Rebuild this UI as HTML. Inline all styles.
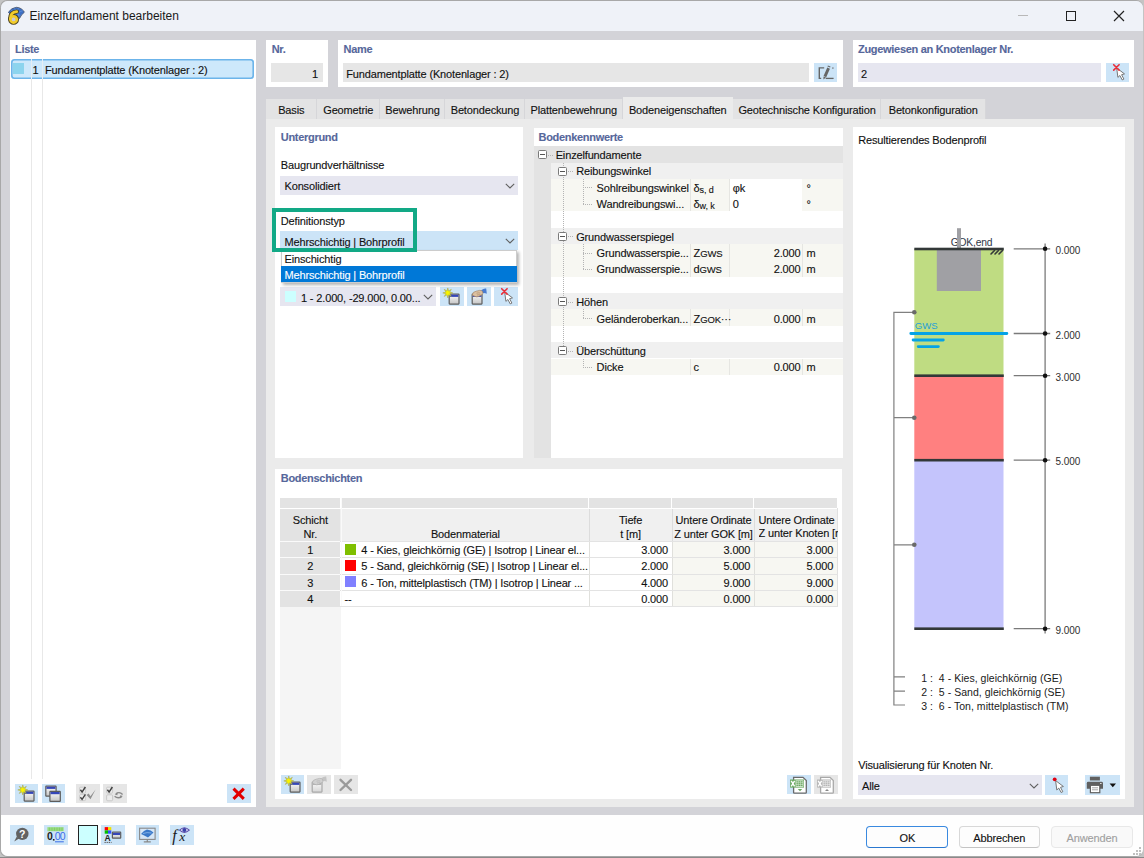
<!DOCTYPE html>
<html><head><meta charset="utf-8"><style>
html,body{margin:0;padding:0}
body{width:1144px;height:858px;overflow:hidden;position:relative;font-family:"Liberation Sans",sans-serif;font-size:11px;color:#111;background:#6b6b6b}
.a{position:absolute}
.t{white-space:nowrap;line-height:13px;letter-spacing:-0.15px;-webkit-text-stroke:0.12px currentColor}
svg.a{overflow:visible}
</style></head><body>
<svg width="0" height="0" style="position:absolute"><defs>
<linearGradient id="wg" x1="0" y1="0" x2="0" y2="1"><stop offset="0" stop-color="#fdfdfd"/><stop offset="1" stop-color="#c4c4c4"/></linearGradient>
<linearGradient id="wgd" x1="0" y1="0" x2="0" y2="1"><stop offset="0" stop-color="#fafafa"/><stop offset="1" stop-color="#d6d6d6"/></linearGradient>
</defs></svg>
<div class="a " style="left:0px;top:0px;width:1144px;height:858px;background:#c4c4c4;"></div>
<div class="a " style="left:0px;top:856.6px;width:1144px;height:1.4px;background:#8a8a8a;"></div>
<div class="a " style="left:0px;top:0px;width:1143.2px;height:856.8px;background:#a8a8a8;border-radius:7px"></div>
<div class="a " style="left:0.8px;top:0.9px;width:1141.8px;height:855.1px;background:#d3d3d8;border-radius:6.5px"></div>
<div class="a " style="left:0.8px;top:0.9px;width:1141.8px;height:30.2px;background:#eff2f8;border-radius:6.5px 6.5px 0 0"></div>
<div class="a " style="left:0.8px;top:815.2px;width:1141.8px;height:40.8px;background:#fefefe;border-radius:0 0 6.5px 6.5px"></div>
<div class="a " style="left:1139px;top:847px;width:2px;height:2px;background:#c0c0c0;"></div>
<div class="a " style="left:1136px;top:850px;width:2px;height:2px;background:#c0c0c0;"></div>
<div class="a " style="left:1139px;top:850px;width:2px;height:2px;background:#c0c0c0;"></div>
<div class="a " style="left:1133px;top:853px;width:2px;height:2px;background:#c0c0c0;"></div>
<div class="a " style="left:1136px;top:853px;width:2px;height:2px;background:#c0c0c0;"></div>
<div class="a " style="left:1139px;top:853px;width:2px;height:2px;background:#c0c0c0;"></div>
<svg class="a" style="left:7px;top:6px;" width="19" height="19" viewBox="0 0 19 19"><path d="M1.3 6.3 Q4.5 1.6 9.6 1.3 Q14.6 1.6 17.4 6.2 L14.5 9 L12.5 12.5 L10 11 L4 9 Z" fill="#3d6fc4" stroke="#4a5468" stroke-width="0.8" stroke-linejoin="round"/><path d="M4 4.5 L13.5 9.5 M7.5 2.2 L12 10.5 M3 7.2 L12 2.5 M8 8 L16 4.5" stroke="#7aaae8" stroke-width="0.6" opacity="0.8"/><path d="M3.2 13 Q3.2 6.3 9.8 5.6" stroke="#4a4020" stroke-width="4.4" fill="none" stroke-linecap="round"/><circle cx="6.6" cy="13.4" r="3.2" fill="none" stroke="#4a4020" stroke-width="4.4"/><path d="M3.2 13 Q3.2 6.3 9.8 5.6" stroke="#f2cc2a" stroke-width="2.6" fill="none" stroke-linecap="round"/><circle cx="6.6" cy="13.4" r="3.2" fill="#c8c8d4" stroke="#f2cc2a" stroke-width="2.6"/></svg>
<div class="a" style="left:29.5px;top:9px;font-size:12px;line-height:14px;color:#1a1a1a;letter-spacing:0">Einzelfundament bearbeiten</div>
<div class="a " style="left:1018px;top:15px;width:10px;height:1px;background:#b8b8b8;"></div>
<div class="a " style="left:1065.5px;top:10.5px;width:8.5px;height:8.5px;border:1.2px solid #222"></div>
<svg class="a" style="left:1113px;top:10px;" width="12" height="12" viewBox="0 0 12 12"><path d="M1 1 L11 11 M11 1 L1 11" stroke="#222" stroke-width="1.2"/></svg>
<div class="a " style="left:10px;top:40px;width:246px;height:767.2px;background:#fff;"></div>
<div class="a t " style="left:15px;top:42.7px;color:#56679b;font-weight:bold;letter-spacing:-0.3px">Liste</div>
<div class="a " style="left:31px;top:59px;width:1px;height:719.5px;background:#e8e8e8;"></div>
<div class="a " style="left:42px;top:59px;width:1px;height:719.5px;background:#e8e8e8;"></div>
<div class="a " style="left:10.6px;top:59.3px;width:243.4px;height:19.4px;background:#cde8fb;box-shadow:inset 0 0 0 1.6px #6cb4ea;border-radius:3.5px"></div>
<div class="a " style="left:31px;top:59px;width:1px;height:20px;background:#e6eef4;"></div>
<div class="a " style="left:42px;top:59px;width:1px;height:20px;background:#e6eef4;"></div>
<div class="a " style="left:13.1px;top:63.1px;width:11.3px;height:10.8px;background:#8cd4ee;"></div>
<div class="a t " style="right:1105.5px;top:64.0px;text-align:right;">1</div>
<div class="a t " style="left:45px;top:64.0px;">Fundamentplatte (Knotenlager : 2)</div>
<div class="a " style="left:266px;top:40px;width:62px;height:46.5px;background:#fff;"></div>
<div class="a t " style="left:271.7px;top:42.7px;color:#56679b;font-weight:bold;letter-spacing:-0.3px">Nr.</div>
<div class="a " style="left:271px;top:63px;width:52px;height:19.3px;background:#e6e6e6;"></div>
<div class="a t " style="right:826px;top:68.0px;text-align:right;">1</div>
<div class="a " style="left:338px;top:40px;width:505px;height:46.5px;background:#fff;"></div>
<div class="a t " style="left:343.5px;top:42.7px;color:#56679b;font-weight:bold;letter-spacing:-0.3px">Name</div>
<div class="a " style="left:343px;top:63px;width:466px;height:19.3px;background:#e6e6e6;"></div>
<div class="a t " style="left:346.2px;top:68.0px;">Fundamentplatte (Knotenlager : 2)</div>
<div class="a " style="left:813.7px;top:63px;width:23.6px;height:19.3px;background:#cce4f7;"></div>
<div class="a " style="left:853px;top:40px;width:281px;height:46.5px;background:#fff;"></div>
<div class="a t " style="left:858px;top:42.7px;color:#56679b;font-weight:bold;letter-spacing:-0.3px">Zugewiesen an Knotenlager Nr.</div>
<div class="a " style="left:858px;top:63px;width:243px;height:19.3px;background:#e6e6f0;"></div>
<div class="a t " style="left:861px;top:68.0px;">2</div>
<div class="a " style="left:1105.5px;top:63px;width:23.5px;height:19.3px;background:#cce4f7;"></div>
<div class="a " style="left:266px;top:99px;width:50.5px;height:20px;background:#e3e3e4;"></div>
<div class="a " style="left:315.5px;top:99px;width:1.0px;height:20px;background:#d6d6d9;"></div>
<div class="a t " style="left:191.25px;width:200px;top:104.4px;text-align:center;">Basis</div>
<div class="a " style="left:316.5px;top:99px;width:63.5px;height:20px;background:#e3e3e4;"></div>
<div class="a " style="left:379px;top:99px;width:1px;height:20px;background:#d6d6d9;"></div>
<div class="a t " style="left:248.25px;width:200px;top:104.4px;text-align:center;">Geometrie</div>
<div class="a " style="left:380px;top:99px;width:65px;height:20px;background:#e3e3e4;"></div>
<div class="a " style="left:444px;top:99px;width:1px;height:20px;background:#d6d6d9;"></div>
<div class="a t " style="left:312.5px;width:200px;top:104.4px;text-align:center;">Bewehrung</div>
<div class="a " style="left:445px;top:99px;width:80px;height:20px;background:#e3e3e4;"></div>
<div class="a " style="left:524px;top:99px;width:1px;height:20px;background:#d6d6d9;"></div>
<div class="a t " style="left:385.0px;width:200px;top:104.4px;text-align:center;">Betondeckung</div>
<div class="a " style="left:525px;top:99px;width:97.5px;height:20px;background:#e3e3e4;"></div>
<div class="a " style="left:621.5px;top:99px;width:1.0px;height:20px;background:#d6d6d9;"></div>
<div class="a t " style="left:473.75px;width:200px;top:104.4px;text-align:center;">Plattenbewehrung</div>
<div class="a " style="left:622.5px;top:97px;width:110.5px;height:22px;background:#ebebeb;"></div>
<div class="a t " style="left:577.75px;width:200px;top:104.4px;text-align:center;">Bodeneigenschaften</div>
<div class="a " style="left:733px;top:99px;width:148px;height:20px;background:#e3e3e4;"></div>
<div class="a " style="left:880px;top:99px;width:1px;height:20px;background:#d6d6d9;"></div>
<div class="a t " style="left:707.0px;width:200px;top:104.4px;text-align:center;">Geotechnische Konfiguration</div>
<div class="a " style="left:881px;top:99px;width:104.5px;height:20px;background:#e3e3e4;"></div>
<div class="a " style="left:984.5px;top:99px;width:1.0px;height:20px;background:#d6d6d9;"></div>
<div class="a t " style="left:833.25px;width:200px;top:104.4px;text-align:center;">Betonkonfiguration</div>
<div class="a " style="left:266px;top:119px;width:868px;height:688.2px;background:#ebebeb;"></div>
<div class="a " style="left:275.2px;top:127.3px;width:247.9px;height:330.8px;background:#fff;"></div>
<div class="a t " style="left:280.8px;top:130.5px;color:#56679b;font-weight:bold;letter-spacing:-0.3px">Untergrund</div>
<div class="a t " style="left:280.8px;top:159.0px;">Baugrundverhältnisse</div>
<div class="a " style="left:280.3px;top:175.8px;width:237.7px;height:18.8px;background:#e6e6f0;"></div>
<div class="a t " style="left:284.5px;top:180.0px;">Konsolidiert</div>
<div class="a t " style="left:280.8px;top:214.5px;">Definitionstyp</div>
<div class="a " style="left:280.3px;top:231.4px;width:237.7px;height:18.3px;background:#cce4f7;"></div>
<div class="a t " style="left:284.5px;top:235.5px;">Mehrschichtig | Bohrprofil</div>
<div class="a " style="left:280.3px;top:287.2px;width:155.4px;height:18.8px;background:#e6e6f0;"></div>
<div class="a " style="left:284.5px;top:290.8px;width:11.7px;height:11.5px;background:#ccffff;"></div>
<div class="a t " style="left:301px;top:291.5px;">1 - 2.000, -29.000, 0.00...</div>
<div class="a " style="left:440.4px;top:287.2px;width:23.5px;height:18.8px;background:#cce4f7;"></div>
<div class="a " style="left:467.3px;top:287.2px;width:23.5px;height:18.8px;background:#cce4f7;"></div>
<div class="a " style="left:494.2px;top:287.2px;width:23.5px;height:18.8px;background:#cce4f7;"></div>
<div class="a " style="left:280.8px;top:249.7px;width:236.7px;height:33px;background:#fff;box-shadow:2px 2px 3px rgba(0,0,0,0.3);border:1px solid #ccc;box-sizing:border-box"></div>
<div class="a t " style="left:284.5px;top:253.0px;">Einschichtig</div>
<div class="a " style="left:281.3px;top:266.4px;width:235.7px;height:15.8px;background:#0078d7;"></div>
<div class="a t " style="left:284.5px;top:269.0px;color:#fff">Mehrschichtig | Bohrprofil</div>
<div class="a " style="left:272.1px;top:208.4px;width:144.6px;height:43.6px;border:4.6px solid #12a986;box-sizing:border-box"></div>
<div class="a " style="left:533.6px;top:127.6px;width:309.1px;height:330.4px;background:#fff;"></div>
<div class="a t " style="left:538.5px;top:130.5px;color:#56679b;font-weight:bold;letter-spacing:-0.3px">Bodenkennwerte</div>
<div class="a " style="left:533.6px;top:146px;width:17.4px;height:312px;background:#e3e3e3;"></div>
<div class="a " style="left:533.6px;top:146px;width:309.1px;height:16.5px;background:#e3e3e3;"></div>
<div class="a " style="left:551px;top:162.5px;width:291.7px;height:16.1px;background:#f0f0f0;"></div>
<div class="a " style="left:551px;top:228px;width:291.7px;height:16px;background:#f0f0f0;"></div>
<div class="a " style="left:551px;top:293.2px;width:291.7px;height:16.0px;background:#f0f0f0;"></div>
<div class="a " style="left:551px;top:342.2px;width:291.7px;height:16.3px;background:#f0f0f0;"></div>
<div class="a " style="left:551px;top:178.6px;width:178.3px;height:32.9px;background:#f7f7f2;"></div>
<div class="a " style="left:802.4px;top:178.6px;width:40.3px;height:32.9px;background:#f7f7f2;"></div>
<div class="a " style="left:690px;top:178.6px;width:1px;height:32.9px;background:#e4e4e0;"></div>
<div class="a " style="left:729px;top:178.6px;width:1px;height:32.9px;background:#e6e6e2;"></div>
<div class="a " style="left:551px;top:244px;width:291.7px;height:32.8px;background:#f7f7f2;"></div>
<div class="a " style="left:802px;top:244px;width:1px;height:32.8px;background:#e6e6e2;"></div>
<div class="a " style="left:690px;top:244px;width:1px;height:32.8px;background:#e4e4e0;"></div>
<div class="a " style="left:729px;top:244px;width:1px;height:32.8px;background:#e6e6e2;"></div>
<div class="a " style="left:551px;top:309.2px;width:291.7px;height:16.8px;background:#f7f7f2;"></div>
<div class="a " style="left:802px;top:309.2px;width:1px;height:16.8px;background:#e6e6e2;"></div>
<div class="a " style="left:690px;top:309.2px;width:1px;height:16.8px;background:#e4e4e0;"></div>
<div class="a " style="left:729px;top:309.2px;width:1px;height:16.8px;background:#e6e6e2;"></div>
<div class="a " style="left:551px;top:358.5px;width:291.7px;height:16.4px;background:#f7f7f2;"></div>
<div class="a " style="left:802px;top:358.5px;width:1px;height:16.4px;background:#e6e6e2;"></div>
<div class="a " style="left:690px;top:358.5px;width:1px;height:16.4px;background:#e4e4e0;"></div>
<div class="a " style="left:729px;top:358.5px;width:1px;height:16.4px;background:#e6e6e2;"></div>
<div class="a " style="left:562.5px;top:162.5px;width:1px;height:188px;background-image:linear-gradient(to bottom,#b4b4b4 50%,transparent 50%);background-size:1px 2px"></div>
<div class="a " style="left:547.5px;top:154.5px;width:6px;height:1px;background-image:linear-gradient(to right,#b4b4b4 50%,transparent 50%);background-size:2px 1px"></div>
<div class="a " style="left:568px;top:171px;width:6px;height:1px;background-image:linear-gradient(to right,#b4b4b4 50%,transparent 50%);background-size:2px 1px"></div>
<div class="a " style="left:568px;top:236.4px;width:6px;height:1px;background-image:linear-gradient(to right,#b4b4b4 50%,transparent 50%);background-size:2px 1px"></div>
<div class="a " style="left:568px;top:301.6px;width:6px;height:1px;background-image:linear-gradient(to right,#b4b4b4 50%,transparent 50%);background-size:2px 1px"></div>
<div class="a " style="left:568px;top:350.7px;width:6px;height:1px;background-image:linear-gradient(to right,#b4b4b4 50%,transparent 50%);background-size:2px 1px"></div>
<div class="a " style="left:582.5px;top:178.6px;width:1px;height:25.599999999999994px;background-image:linear-gradient(to bottom,#b4b4b4 50%,transparent 50%);background-size:1px 2px"></div>
<div class="a " style="left:583px;top:187.3px;width:10px;height:1px;background-image:linear-gradient(to right,#b4b4b4 50%,transparent 50%);background-size:2px 1px"></div>
<div class="a " style="left:583px;top:203.7px;width:10px;height:1px;background-image:linear-gradient(to right,#b4b4b4 50%,transparent 50%);background-size:2px 1px"></div>
<div class="a " style="left:582.5px;top:244px;width:1px;height:25.600000000000023px;background-image:linear-gradient(to bottom,#b4b4b4 50%,transparent 50%);background-size:1px 2px"></div>
<div class="a " style="left:583px;top:252.7px;width:10px;height:1px;background-image:linear-gradient(to right,#b4b4b4 50%,transparent 50%);background-size:2px 1px"></div>
<div class="a " style="left:583px;top:269.1px;width:10px;height:1px;background-image:linear-gradient(to right,#b4b4b4 50%,transparent 50%);background-size:2px 1px"></div>
<div class="a " style="left:582.5px;top:309.2px;width:1px;height:9.300000000000011px;background-image:linear-gradient(to bottom,#b4b4b4 50%,transparent 50%);background-size:1px 2px"></div>
<div class="a " style="left:583px;top:318px;width:10px;height:1px;background-image:linear-gradient(to right,#b4b4b4 50%,transparent 50%);background-size:2px 1px"></div>
<div class="a " style="left:582.5px;top:358.5px;width:1px;height:9.199999999999989px;background-image:linear-gradient(to bottom,#b4b4b4 50%,transparent 50%);background-size:1px 2px"></div>
<div class="a " style="left:583px;top:367.2px;width:10px;height:1px;background-image:linear-gradient(to right,#b4b4b4 50%,transparent 50%);background-size:2px 1px"></div>
<div class="a " style="left:537.7px;top:150.3px;width:7px;height:7px;border:1px solid #7a7a7a;background:#fff;border-radius:1.5px"></div>
<div class="a " style="left:539.7px;top:154.3px;width:5.0px;height:1.0px;background:#555;"></div>
<div class="a " style="left:558.1px;top:166.5px;width:7px;height:7px;border:1px solid #7a7a7a;background:#fff;border-radius:1.5px"></div>
<div class="a " style="left:560.1px;top:170.5px;width:5.0px;height:1.0px;background:#555;"></div>
<div class="a " style="left:558.1px;top:231.9px;width:7px;height:7px;border:1px solid #7a7a7a;background:#fff;border-radius:1.5px"></div>
<div class="a " style="left:560.1px;top:235.9px;width:5.0px;height:1.0px;background:#555;"></div>
<div class="a " style="left:558.1px;top:297.1px;width:7px;height:7px;border:1px solid #7a7a7a;background:#fff;border-radius:1.5px"></div>
<div class="a " style="left:560.1px;top:301.1px;width:5.0px;height:1.0px;background:#555;"></div>
<div class="a " style="left:558.1px;top:346.2px;width:7px;height:7px;border:1px solid #7a7a7a;background:#fff;border-radius:1.5px"></div>
<div class="a " style="left:560.1px;top:350.2px;width:5.0px;height:1.0px;background:#555;"></div>
<div class="a t " style="left:555.7px;top:148.8px;">Einzelfundamente</div>
<div class="a t " style="left:576.2px;top:165.3px;">Reibungswinkel</div>
<div class="a t " style="left:576.2px;top:230.8px;">Grundwasserspiegel</div>
<div class="a t " style="left:576.2px;top:296.0px;">Höhen</div>
<div class="a t " style="left:576.2px;top:345.1px;">Überschüttung</div>
<div class="a t " style="left:596.6px;top:181.5px;">Sohlreibungswinkel</div>
<div class="a t " style="left:693.6px;top:181.5px;">δ<span style="font-size:9px;position:relative;top:1px">s, d</span></div>
<div class="a t " style="left:732.8px;top:181.5px;">φk</div>
<div class="a t " style="left:806.4px;top:181.5px;">°</div>
<div class="a t " style="left:596.6px;top:197.9px;">Wandreibungswi...</div>
<div class="a t " style="left:693.6px;top:197.9px;">δ<span style="font-size:9px;position:relative;top:1px">w, k</span></div>
<div class="a t " style="left:732.8px;top:197.9px;">0</div>
<div class="a t " style="left:806.4px;top:197.9px;">°</div>
<div class="a t " style="left:596.6px;top:247.0px;">Grundwasserspie...</div>
<div class="a t " style="left:693.6px;top:247.0px;">Z<span style="font-size:9.5px">GWS</span></div>
<div class="a t " style="right:343.5px;top:247.0px;text-align:right;">2.000</div>
<div class="a t " style="left:806.4px;top:247.0px;">m</div>
<div class="a t " style="left:596.6px;top:263.4px;">Grundwasserspie...</div>
<div class="a t " style="left:693.6px;top:263.4px;">d<span style="font-size:9.5px">GWS</span></div>
<div class="a t " style="right:343.5px;top:263.4px;text-align:right;">2.000</div>
<div class="a t " style="left:806.4px;top:263.4px;">m</div>
<div class="a t " style="left:596.6px;top:312.7px;">Geländeroberkan...</div>
<div class="a t " style="left:693.6px;top:312.7px;">Z<span style="font-size:9.5px">GOK</span>···</div>
<div class="a t " style="right:343.5px;top:312.7px;text-align:right;">0.000</div>
<div class="a t " style="left:806.4px;top:312.7px;">m</div>
<div class="a t " style="left:596.6px;top:361.4px;">Dicke</div>
<div class="a t " style="left:693.6px;top:361.4px;">c</div>
<div class="a t " style="right:343.5px;top:361.4px;text-align:right;">0.000</div>
<div class="a t " style="left:806.4px;top:361.4px;">m</div>
<div class="a " style="left:275.2px;top:469px;width:566.8px;height:329.9px;background:#fff;"></div>
<div class="a t " style="left:280.8px;top:471.7px;color:#56679b;font-weight:bold;letter-spacing:-0.3px">Bodenschichten</div>
<div class="a " style="left:280.1px;top:498.4px;width:59.4px;height:9.3px;background:#e3e3e3;"></div>
<div class="a " style="left:341.5px;top:498.4px;width:246.7px;height:9.3px;background:#e3e3e3;"></div>
<div class="a " style="left:589.2px;top:498.4px;width:81.8px;height:9.3px;background:#e3e3e3;"></div>
<div class="a " style="left:672px;top:498.4px;width:81.4px;height:9.3px;background:#e3e3e3;"></div>
<div class="a " style="left:754.4px;top:498.4px;width:82.2px;height:9.3px;background:#e3e3e3;"></div>
<div class="a " style="left:280.1px;top:507.7px;width:557.5px;height:33.8px;background:#f0f0f0;"></div>
<div class="a " style="left:589.2px;top:507.7px;width:1.0px;height:98.8px;background:#dcdcdc;"></div>
<div class="a " style="left:672px;top:507.7px;width:1px;height:98.8px;background:#dcdcdc;"></div>
<div class="a " style="left:754.4px;top:507.7px;width:1.0px;height:98.8px;background:#dcdcdc;"></div>
<div class="a " style="left:280.1px;top:498.4px;width:60.4px;height:107.7px;background:#e3e3e3;"></div>
<div class="a " style="left:280.1px;top:507.7px;width:557.9px;height:1.0px;background:#fff;"></div>
<div class="a " style="left:280.1px;top:606.1px;width:60.9px;height:162.5px;background:#f5f5f5;"></div>
<div class="a " style="left:341.5px;top:541.5px;width:247.7px;height:64.6px;background:#fff;"></div>
<div class="a " style="left:589.2px;top:541.5px;width:82.8px;height:64.6px;background:#fff;"></div>
<div class="a " style="left:672px;top:541.5px;width:165.6px;height:64.6px;background:#f7f7f2;"></div>
<div class="a " style="left:589.2px;top:541.5px;width:1.0px;height:64.6px;background:#e0e0dc;"></div>
<div class="a " style="left:672px;top:541.5px;width:1px;height:64.6px;background:#e0e0dc;"></div>
<div class="a " style="left:754.4px;top:541.5px;width:1.0px;height:64.6px;background:#e0e0dc;"></div>
<div class="a " style="left:837px;top:507.7px;width:1px;height:98.4px;background:#e0e0e0;"></div>
<div class="a " style="left:280.1px;top:541px;width:557.5px;height:1px;background:#e3e3e3;"></div>
<div class="a " style="left:280.1px;top:557.2px;width:557.5px;height:1.0px;background:#e3e3e3;"></div>
<div class="a " style="left:280.1px;top:573.6px;width:557.5px;height:1.0px;background:#e3e3e3;"></div>
<div class="a " style="left:280.1px;top:590.1px;width:557.5px;height:1.0px;background:#e3e3e3;"></div>
<div class="a " style="left:280.1px;top:605.6px;width:557.5px;height:1.0px;background:#e3e3e3;"></div>
<div class="a " style="left:280.1px;top:541px;width:60.4px;height:1px;background:#fafafa;"></div>
<div class="a " style="left:280.1px;top:557.2px;width:60.4px;height:1.0px;background:#fafafa;"></div>
<div class="a " style="left:280.1px;top:573.6px;width:60.4px;height:1.0px;background:#fafafa;"></div>
<div class="a " style="left:280.1px;top:590.1px;width:60.4px;height:1.0px;background:#fafafa;"></div>
<div class="a " style="left:340.5px;top:498.4px;width:1.0px;height:107.7px;background:#fafafa;"></div>
<div class="a t " style="left:210.3px;width:200px;top:513.5px;text-align:center;">Schicht</div>
<div class="a t " style="left:210.3px;width:200px;top:528.2px;text-align:center;">Nr.</div>
<div class="a t " style="left:365.4px;width:200px;top:528.2px;text-align:center;">Bodenmaterial</div>
<div class="a t " style="left:530.6px;width:200px;top:513.5px;text-align:center;">Tiefe</div>
<div class="a t " style="left:530.6px;width:200px;top:528.2px;text-align:center;">t [m]</div>
<div class="a t " style="left:613.5px;width:200px;top:513.5px;text-align:center;">Untere Ordinate</div>
<div class="a t " style="left:613.5px;width:200px;top:528.2px;text-align:center;">Z unter GOK [m]</div>
<div class="a t " style="left:758.5px;top:513.5px;">Untere Ordinate</div>
<div class="a" style="left:758.5px;top:527.4px;width:79px;height:14px;overflow:hidden"><div class="t" style="position:absolute;left:0;top:0">Z unter Knoten [m]</div></div>
<div class="a t " style="left:210.3px;width:200px;top:543.9px;text-align:center;">1</div>
<div class="a " style="left:344.8px;top:543.6999999999999px;width:11.2px;height:10.9px;background:#7fbf00;"></div>
<div class="a t " style="left:361.3px;top:543.9px;">4 - Kies, gleichkörnig (GE) | Isotrop | Linear el...</div>
<div class="a t " style="right:476px;top:543.9px;text-align:right;">3.000</div>
<div class="a t " style="right:393.7px;top:543.9px;text-align:right;">3.000</div>
<div class="a t " style="right:310.8px;top:543.9px;text-align:right;">3.000</div>
<div class="a t " style="left:210.3px;width:200px;top:560.3px;text-align:center;">2</div>
<div class="a " style="left:344.8px;top:560.0999999999999px;width:11.2px;height:10.9px;background:#ff0000;"></div>
<div class="a t " style="left:361.3px;top:560.3px;">5 - Sand, gleichkörnig (SE) | Isotrop | Linear el...</div>
<div class="a t " style="right:476px;top:560.3px;text-align:right;">2.000</div>
<div class="a t " style="right:393.7px;top:560.3px;text-align:right;">5.000</div>
<div class="a t " style="right:310.8px;top:560.3px;text-align:right;">5.000</div>
<div class="a t " style="left:210.3px;width:200px;top:576.5px;text-align:center;">3</div>
<div class="a " style="left:344.8px;top:576.3px;width:11.2px;height:10.9px;background:#8080ff;"></div>
<div class="a t " style="left:361.3px;top:576.5px;">6 - Ton, mittelplastisch (TM) | Isotrop | Linear ...</div>
<div class="a t " style="right:476px;top:576.5px;text-align:right;">4.000</div>
<div class="a t " style="right:393.7px;top:576.5px;text-align:right;">9.000</div>
<div class="a t " style="right:310.8px;top:576.5px;text-align:right;">9.000</div>
<div class="a t " style="left:210.3px;width:200px;top:592.9px;text-align:center;">4</div>
<div class="a t " style="left:344.5px;top:592.9px;">--</div>
<div class="a t " style="right:476px;top:592.9px;text-align:right;">0.000</div>
<div class="a t " style="right:393.7px;top:592.9px;text-align:right;">0.000</div>
<div class="a t " style="right:310.8px;top:592.9px;text-align:right;">0.000</div>
<div class="a " style="left:852.8px;top:127.2px;width:272.2px;height:671.4px;background:#fff;"></div>
<div class="a t " style="left:858.2px;top:134.0px;">Resultierendes Bodenprofil</div>
<svg class="a" style="left:0;top:0" width="1144" height="858" viewBox="0 0 1144 858"><rect x="914.3" y="249" width="89.2" height="127" fill="#bfdc82"/><rect x="914.3" y="376" width="89.2" height="84.2" fill="#ff8080"/><rect x="914.3" y="460.2" width="89.2" height="168.5" fill="#c4c4fc"/><rect x="936.8" y="249" width="44.2" height="42" fill="#a0a0a4"/><text x="950.7" y="246.4" font-family="Liberation Sans" font-size="10.3" fill="#303848" letter-spacing="-0.2">GOK,end</text><rect x="957" y="228.2" width="4" height="21" fill="#a0a0a4"/><rect x="914.3" y="247.7" width="89.5" height="2.6" fill="#333838"/><rect x="914.3" y="374.4" width="89.5" height="2.6" fill="#333838"/><rect x="914.3" y="458.9" width="89.5" height="2.6" fill="#333838"/><rect x="914.3" y="627.4000000000001" width="89.5" height="2.6" fill="#333838"/><path d="M991 254 L994.5 250.5 M995 254 L998.5 250.5 M999 254 L1002.5 250.5" stroke="#333838" stroke-width="1.6" stroke-linecap="round"/><text x="914.8" y="329.3" font-family="Liberation Sans" font-size="9.6" fill="#1fa0d8">GWS</text><path d="M910.8 333.5 H1006.9 M913.1 340 H943.3 M918.2 346.6 H938.4" stroke="#04a3e6" stroke-width="2.8" stroke-linecap="round"/><path d="M1045.1 243.4 V633.4" stroke="#7a7a7a" stroke-width="1.3"/><path d="M1013.7 248.8 H1050.2" stroke="#7a7a7a" stroke-width="1.3"/><circle cx="1045.1" cy="248.8" r="2.3" fill="#111"/><text x="1055.6" y="254.0" font-family="Liberation Sans" font-size="10" fill="#303030" letter-spacing="-0.1">0.000</text><path d="M1013.7 333.5 H1050.2" stroke="#7a7a7a" stroke-width="1.3"/><circle cx="1045.1" cy="333.5" r="2.3" fill="#111"/><text x="1055.6" y="338.7" font-family="Liberation Sans" font-size="10" fill="#303030" letter-spacing="-0.1">2.000</text><path d="M1013.7 375.7 H1050.2" stroke="#7a7a7a" stroke-width="1.3"/><circle cx="1045.1" cy="375.7" r="2.3" fill="#111"/><text x="1055.6" y="380.9" font-family="Liberation Sans" font-size="10" fill="#303030" letter-spacing="-0.1">3.000</text><path d="M1013.7 460.2 H1050.2" stroke="#7a7a7a" stroke-width="1.3"/><circle cx="1045.1" cy="460.2" r="2.3" fill="#111"/><text x="1055.6" y="465.4" font-family="Liberation Sans" font-size="10" fill="#303030" letter-spacing="-0.1">5.000</text><path d="M1013.7 628.7 H1050.2" stroke="#7a7a7a" stroke-width="1.3"/><circle cx="1045.1" cy="628.7" r="2.3" fill="#111"/><text x="1055.6" y="633.9000000000001" font-family="Liberation Sans" font-size="10" fill="#303030" letter-spacing="-0.1">9.000</text><path d="M914.3 312.3 H893.9 V705 H905 M893.9 417.7 H914.3 M893.9 544.8 H914.3 M893.9 676.9 H905 M893.9 691.1 H905" stroke="#808080" stroke-width="1.2" fill="none"/><circle cx="914.3" cy="312.3" r="2.3" fill="#6a6a6a"/><circle cx="914.3" cy="417.7" r="2.3" fill="#6a6a6a"/><circle cx="914.3" cy="544.8" r="2.3" fill="#6a6a6a"/><text x="921.2" y="681.5" font-family="Liberation Sans" font-size="10.5" fill="#202020" xml:space="preserve" letter-spacing="0.03">1 :  4 - Kies, gleichkörnig (GE)</text><text x="921.2" y="695.7" font-family="Liberation Sans" font-size="10.5" fill="#202020" xml:space="preserve" letter-spacing="0.03">2 :  5 - Sand, gleichkörnig (SE)</text><text x="921.2" y="709.8" font-family="Liberation Sans" font-size="10.5" fill="#202020" xml:space="preserve" letter-spacing="0.03">3 :  6 - Ton, mittelplastisch (TM)</text></svg>
<div class="a t " style="left:858.2px;top:758.5px;">Visualisierung für Knoten Nr.</div>
<div class="a " style="left:858px;top:775.3px;width:183.5px;height:19.7px;background:#e6e6f0;"></div>
<div class="a t " style="left:862px;top:780.0px;">Alle</div>
<div class="a " style="left:1045.3px;top:775.3px;width:23.2px;height:19.7px;background:#cce4f7;"></div>
<div class="a " style="left:1085.2px;top:775.3px;width:34.7px;height:19.7px;background:#cce4f7;"></div>
<div class="a " style="left:866.2px;top:826.1px;width:82.2px;height:21.6px;border:1.2px solid #3a8ae0;border-bottom-color:#2a78d0;border-radius:4px;box-sizing:border-box;background:#fdfdfd"></div>
<div class="a t " style="left:807.3px;width:200px;top:831.5px;text-align:center;">OK</div>
<div class="a " style="left:958.5px;top:826.1px;width:81.7px;height:21.6px;border:1px solid #d8d8d8;border-bottom-color:#c4c4c4;border-radius:4px;box-sizing:border-box;background:#fdfdfd"></div>
<div class="a t " style="left:899.3px;width:200px;top:831.5px;text-align:center;">Abbrechen</div>
<div class="a " style="left:1051.3px;top:826.1px;width:81.4px;height:21.6px;border:1px solid #e8e8e8;border-radius:4px;box-sizing:border-box;background:#f9f9f9"></div>
<div class="a t " style="left:992px;width:200px;top:831.5px;text-align:center;color:#a0a0a0">Anwenden</div>
<div class="a " style="left:14.7px;top:783.6px;width:23.3px;height:19.4px;background:#cce4f7;"></div>
<div class="a " style="left:42px;top:783.6px;width:23px;height:19.4px;background:#cce4f7;"></div>
<div class="a " style="left:76px;top:783.6px;width:24px;height:19.4px;background:#e6e6e6;"></div>
<div class="a " style="left:103px;top:783.6px;width:23.7px;height:19.4px;background:#e6e6e6;"></div>
<div class="a " style="left:227.2px;top:783.6px;width:23.6px;height:19.4px;background:#cce4f7;"></div>
<div class="a " style="left:10px;top:825.2px;width:23.5px;height:19.6px;background:#cce4f7;"></div>
<div class="a " style="left:44px;top:825.2px;width:24px;height:19.6px;background:#cce4f7;"></div>
<div class="a " style="left:101.4px;top:825.2px;width:23.6px;height:19.6px;background:#cce4f7;"></div>
<div class="a " style="left:135.8px;top:825.2px;width:23.2px;height:19.6px;background:#cce4f7;"></div>
<div class="a " style="left:170px;top:825.2px;width:23.7px;height:19.6px;background:#cce4f7;"></div>
<div class="a " style="left:78px;top:825.2px;width:20px;height:19.6px;background:#ccffff;border:1.5px solid #222;box-sizing:border-box"></div>
<svg class="a" style="left:813.7px;top:63px;" width="24" height="19.3" viewBox="0 0 24 19.3"><path d="M7.2 15.4 H5.3 V4.9 H10.2" stroke="#666" stroke-width="1.4" fill="none"/><path d="M13.3 4.6 L15.9 5.7 L12.2 14.2 L9.6 13.1 Z" fill="#666"/><path d="M9.5 13.6 L12 14.6 L9.4 16.4 Z" fill="#666"/><path d="M13.9 2.4 L16.5 3.5 L16.1 4.6 L13.5 3.5 Z" fill="#666"/><path d="M11.7 15.4 H19.6" stroke="#666" stroke-width="1.3"/><circle cx="18.9" cy="5.1" r="0.8" fill="#777"/></svg>
<svg class="a" style="left:1105.5px;top:63px;" width="24" height="20" viewBox="0 0 24 20"><path transform="translate(0.0,0)" d="M10.7 5 L11.9 14.4 L13.9 12.5 L16.2 16.9 L17.9 16.1 L15.6 11.7 L18.5 10.9 Z" fill="#fff" stroke="#6a6a6a" stroke-width="0.9" stroke-linejoin="round"/><path d="M7.7 1.7 L13.1 7.1 M13.1 1.7 L7.7 7.1" stroke="#e8303a" stroke-width="1.6" stroke-linecap="round"/></svg>
<svg class="a" style="left:505px;top:182.5px;" width="10" height="6" viewBox="0 0 10 6"><path d="M0.8 0.8 L5 5 L9.2 0.8" stroke="#606060" stroke-width="1.1" fill="none"/></svg>
<svg class="a" style="left:505px;top:237.5px;" width="10" height="6" viewBox="0 0 10 6"><path d="M0.8 0.8 L5 5 L9.2 0.8" stroke="#606060" stroke-width="1.1" fill="none"/></svg>
<svg class="a" style="left:422.5px;top:293.8px;" width="10" height="6" viewBox="0 0 10 6"><path d="M0.8 0.8 L5 5 L9.2 0.8" stroke="#606060" stroke-width="1.1" fill="none"/></svg>
<svg class="a" style="left:440.4px;top:287.1px;" width="24" height="20" viewBox="0 0 24 20"><rect x="9.2" y="7.1" width="9.8" height="10.0" rx="0.5" fill="url(#wg)" stroke="#5c5c5c" stroke-width="1.2"/><rect x="9.799999999999999" y="7.7" width="8.6" height="2.2" fill="#3546b8"/><polygon points="12.80,5.90 9.74,6.70 11.34,9.44 8.60,7.84 7.80,10.90 7.00,7.84 4.26,9.44 5.86,6.70 2.80,5.90 5.86,5.10 4.26,2.36 7.00,3.96 7.80,0.90 8.60,3.96 11.34,2.36 9.74,5.10" fill="#f8f400" stroke="#9a9a50" stroke-width="0.5"/></svg>
<svg class="a" style="left:467.3px;top:287.1px;" width="24" height="20" viewBox="0 0 24 20"><rect x="5.199999999999999" y="7.1" width="9.8" height="10.0" rx="0.5" fill="url(#wg)" stroke="#5c5c5c" stroke-width="1.2"/><rect x="5.8" y="7.7" width="8.6" height="2.2" fill="#3546b8"/><path d="M14.2 3.2 Q17 1 19.2 1.6 L19.8 6.8 Q17.5 5.5 15.5 6.2 Z" fill="#4a7cd0"/><path d="M5.2 8.2 Q5.5 4.6 9.2 4.2 L12.5 3.4 Q14.8 3.2 15.8 4.8 Q16.4 6.8 14.6 8 L11.5 9.5 Q9.5 10.2 8 9.4 Z" fill="#dcc0a0" stroke="#9a7a5a" stroke-width="0.6"/><path d="M9.5 6.2 Q11.5 5.6 13.2 6 M10 8 Q12 7.6 13.5 7.8" stroke="#9a7a5a" stroke-width="0.5" fill="none"/></svg>
<svg class="a" style="left:494.2px;top:287.1px;" width="24" height="20" viewBox="0 0 24 20"><path transform="translate(0.0,0)" d="M10.7 5 L11.9 14.4 L13.9 12.5 L16.2 16.9 L17.9 16.1 L15.6 11.7 L18.5 10.9 Z" fill="#fff" stroke="#6a6a6a" stroke-width="0.9" stroke-linejoin="round"/><path d="M7.7 1.7 L13.1 7.1 M13.1 1.7 L7.7 7.1" stroke="#e8303a" stroke-width="1.6" stroke-linecap="round"/></svg>
<svg class="a" style="left:14.7px;top:783.6px;" width="24" height="20" viewBox="0 0 24 20"><rect x="9.2" y="7.1" width="9.8" height="10.0" rx="0.5" fill="url(#wg)" stroke="#5c5c5c" stroke-width="1.2"/><rect x="9.799999999999999" y="7.7" width="8.6" height="2.2" fill="#3546b8"/><polygon points="12.80,5.90 9.74,6.70 11.34,9.44 8.60,7.84 7.80,10.90 7.00,7.84 4.26,9.44 5.86,6.70 2.80,5.90 5.86,5.10 4.26,2.36 7.00,3.96 7.80,0.90 8.60,3.96 11.34,2.36 9.74,5.10" fill="#f8f400" stroke="#9a9a50" stroke-width="0.5"/></svg>
<svg class="a" style="left:42px;top:783.6px;" width="24" height="20" viewBox="0 0 24 20"><rect x="3.8000000000000003" y="2.1" width="10.3" height="10.100000000000001" rx="0.5" fill="url(#wg)" stroke="#5c5c5c" stroke-width="1.2"/><rect x="4.4" y="2.7" width="9.1" height="2.2" fill="#3546b8"/><rect x="7.8999999999999995" y="7.3999999999999995" width="10.4" height="10.0" rx="0.5" fill="url(#wg)" stroke="#5c5c5c" stroke-width="1.2"/><rect x="8.5" y="8.0" width="9.2" height="2.2" fill="#3546b8"/></svg>
<svg class="a" style="left:76px;top:783.6px;" width="24" height="20" viewBox="0 0 24 20"><rect x="3.6" y="3.2" width="6" height="6" rx="1" fill="#ececec" stroke="#c4c4c4" stroke-width="0.8"/><path d="M4.4 5.8 L6.1 8 L9.4 3" stroke="#404040" stroke-width="1.4" fill="none"/><rect x="3.6" y="10.6" width="6" height="6" rx="1" fill="#ececec" stroke="#c4c4c4" stroke-width="0.8"/><path d="M4.4 13.2 L6.1 15.4 L9.4 10.4" stroke="#404040" stroke-width="1.4" fill="none"/><path d="M10.6 10.9 L12.7 9.6 L14.4 12.3 L19.6 5.4 L14.5 15.2 Z" fill="#909090"/></svg>
<svg class="a" style="left:103px;top:783.6px;" width="24" height="20" viewBox="0 0 24 20"><rect x="3.6" y="3.2" width="6" height="6" rx="1" fill="#ececec" stroke="#c4c4c4" stroke-width="0.8"/><path d="M4.4 5.8 L6.1 8 L9.4 3" stroke="#404040" stroke-width="1.4" fill="none"/><rect x="3.6" y="10.8" width="6" height="6" rx="1.2" fill="#ececec" stroke="#c0c0c0" stroke-width="0.8"/><path d="M19.6 10.4 Q16.5 7.2 12.8 9.8" stroke="#8a8a8a" stroke-width="1.4" fill="none"/><path d="M11.8 10.5 L14.6 8.2 L14.4 11.2 Z" fill="#8a8a8a"/><path d="M11.6 12.2 Q15 15.2 18.6 12.6" stroke="#8a8a8a" stroke-width="1.4" fill="none"/><path d="M19.8 12 L17 14.2 L17.2 11.2 Z" fill="#8a8a8a"/></svg>
<svg class="a" style="left:227.2px;top:783.6px;" width="24" height="20" viewBox="0 0 24 20"><path d="M6.5 4.6 L16.8 14.9 M16.8 4.6 L6.5 14.9" stroke="#e30000" stroke-width="3" stroke-linecap="butt"/></svg>
<div class="a " style="left:307.4px;top:774.7px;width:23.3px;height:19.3px;background:#e6e6e6;"></div>
<div class="a " style="left:334.3px;top:774.7px;width:23.7px;height:19.3px;background:#e6e6e6;"></div>
<div class="a " style="left:280.6px;top:774.7px;width:23.2px;height:19.3px;background:#cce4f7;"></div>
<svg class="a" style="left:280.6px;top:774.7px;" width="24" height="20" viewBox="0 0 24 20"><rect x="9.2" y="7.1" width="9.8" height="10.0" rx="0.5" fill="url(#wg)" stroke="#5c5c5c" stroke-width="1.2"/><rect x="9.799999999999999" y="7.7" width="8.6" height="2.2" fill="#3546b8"/><polygon points="12.80,5.90 9.74,6.70 11.34,9.44 8.60,7.84 7.80,10.90 7.00,7.84 4.26,9.44 5.86,6.70 2.80,5.90 5.86,5.10 4.26,2.36 7.00,3.96 7.80,0.90 8.60,3.96 11.34,2.36 9.74,5.10" fill="#f8f400" stroke="#9a9a50" stroke-width="0.5"/></svg>
<svg class="a" style="left:307.4px;top:774.7px;" width="24" height="20" viewBox="0 0 24 20"><rect x="5.199999999999999" y="7.1" width="9.8" height="10.0" rx="0.5" fill="url(#wgd)" stroke="#a8a8a8" stroke-width="1.2"/><rect x="5.8" y="7.7" width="8.6" height="2.2" fill="#b0b0b0"/><path d="M14.2 3.2 Q17 1 19.2 1.6 L19.8 6.8 Q17.5 5.5 15.5 6.2 Z" fill="#c4c4c4"/><path d="M5.2 8.2 Q5.5 4.6 9.2 4.2 L12.5 3.4 Q14.8 3.2 15.8 4.8 Q16.4 6.8 14.6 8 L11.5 9.5 Q9.5 10.2 8 9.4 Z" fill="#d0d0d0" stroke="#a8a8a8" stroke-width="0.6"/><path d="M9.5 6.2 Q11.5 5.6 13.2 6 M10 8 Q12 7.6 13.5 7.8" stroke="#a8a8a8" stroke-width="0.5" fill="none"/></svg>
<svg class="a" style="left:334.3px;top:774.7px;" width="24" height="20" viewBox="0 0 24 20"><path d="M6.5 4.8 L17 15 M17 4.8 L6.5 15" stroke="#9a9a9a" stroke-width="2.4" stroke-linecap="round"/></svg>
<div class="a " style="left:787px;top:774.7px;width:23.6px;height:19.2px;background:#cce4f7;"></div>
<div class="a " style="left:814px;top:774.7px;width:23.6px;height:19.2px;background:#e6e6e6;"></div>
<svg class="a" style="left:787px;top:774.7px;" width="24" height="20" viewBox="0 0 24 20"><path d="M6.6 2.3 H16 L19.3 5.6 V17.4 Q19.3 18.1 18.6 18.1 H7.3 Q6.6 18.1 6.6 17.4 Z" fill="#fff" stroke="#6a6a6a" stroke-width="1.3"/><rect x="3.1" y="4.5" width="13.9" height="8.1" fill="#6aa860"/><path d="M4.2 5.8 L7.6 11.3 M7.6 5.8 L4.2 11.3" stroke="#fff" stroke-width="1.4"/><rect x="9" y="5.8" width="7" height="5.6" fill="none" stroke="#fff" stroke-width="0.8" opacity="0.8"/><path d="M9 7.7 H16 M9 9.5 H16 M11.3 5.8 V11.4 M13.6 5.8 V11.4" stroke="#fff" stroke-width="0.6" opacity="0.7"/><path d="M10.8 14 L15.2 14 L13 16.2 Z" fill="#6aa860"/></svg>
<svg class="a" style="left:814px;top:774.7px;" width="24" height="20" viewBox="0 0 24 20"><path d="M6.6 2.3 H16 L19.3 5.6 V17.4 Q19.3 18.1 18.6 18.1 H7.3 Q6.6 18.1 6.6 17.4 Z" fill="#fff" stroke="#a8a8a8" stroke-width="1.3"/><rect x="3.1" y="4.5" width="13.9" height="8.1" fill="#b4b4b4"/><path d="M4.2 5.8 L7.6 11.3 M7.6 5.8 L4.2 11.3" stroke="#fff" stroke-width="1.4"/><rect x="9" y="5.8" width="7" height="5.6" fill="none" stroke="#fff" stroke-width="0.8" opacity="0.8"/><path d="M9 7.7 H16 M9 9.5 H16 M11.3 5.8 V11.4 M13.6 5.8 V11.4" stroke="#fff" stroke-width="0.6" opacity="0.7"/><path d="M11 16 L13 14 L15 16 Z" fill="#888"/></svg>
<svg class="a" style="left:1028.5px;top:783px;" width="10" height="6" viewBox="0 0 10 6"><path d="M0.8 0.8 L5 5 L9.2 0.8" stroke="#606060" stroke-width="1.1" fill="none"/></svg>
<svg class="a" style="left:1045.3px;top:775.3px;" width="24" height="20" viewBox="0 0 24 20"><path transform="translate(-0.09999999999999964,0.5999999999999996)" d="M10.7 5 L11.9 14.4 L13.9 12.5 L16.2 16.9 L17.9 16.1 L15.6 11.7 L18.5 10.9 Z" fill="#fff" stroke="#6a6a6a" stroke-width="0.9" stroke-linejoin="round"/><circle cx="9.7" cy="4.3" r="1.9" fill="#e00010"/></svg>
<svg class="a" style="left:1085.2px;top:775.3px;" width="35" height="20" viewBox="0 0 35 20"><rect x="4.9" y="1.7" width="10" height="3.8" fill="#606060"/><path d="M1.8 8.2 Q1.8 6.8 3.2 6.8 H16.6 Q18 6.8 18 8.2 V13.7 H1.8 Z" fill="#606060"/><rect x="15" y="8" width="1.6" height="1" fill="#ddd"/><rect x="5.4" y="10.3" width="9.4" height="7.4" fill="#fff" stroke="#606060" stroke-width="1.2"/><path d="M7 12.8 H13 M7 14.8 H13" stroke="#9a9a9a" stroke-width="0.9"/><path d="M24.6 8.4 H31 L27.8 12.2 Z" fill="#111"/></svg>
<svg class="a" style="left:10px;top:825.2px;" width="24" height="20" viewBox="0 0 24 20"><path d="M9 13.5 L4.2 16.4 L6.8 11.5 Z" fill="#626262"/><circle cx="12.3" cy="8.9" r="6.2" fill="#626262"/><text x="12.3" y="12.6" font-family="Liberation Sans" font-weight="bold" font-size="10.5" fill="#fff" text-anchor="middle">?</text></svg>
<svg class="a" style="left:44px;top:825.2px;" width="24" height="20" viewBox="0 0 24 20"><rect x="3.4" y="2.2" width="16.2" height="4" fill="#96dc7c"/><path d="M5.5 2.6 V5.8 M8 2.6 V5.8 M10.5 2.6 V5.8 M13 2.6 V5.8 M15.5 2.6 V5.8 M18 2.6 V5.8" stroke="#78c060" stroke-width="0.6"/><text x="3" y="15.4" font-family="Liberation Sans" font-weight="bold" font-size="10.5" fill="#222" letter-spacing="-0.6">0</text><rect x="8.9" y="14" width="1.6" height="1.6" fill="#222"/><text x="10.8" y="15.4" font-family="Liberation Sans" font-size="10.5" fill="#3a6ee8" letter-spacing="-0.9">00</text><rect x="11" y="16.3" width="8.8" height="1" fill="#3a6ee8"/></svg>
<svg class="a" style="left:101.2px;top:825.2px;" width="24" height="20" viewBox="0 0 24 20"><rect x="3.7" y="2.1" width="3.3" height="3.3" fill="#ff0000"/><rect x="7" y="2.1" width="3.3" height="3.3" fill="#f0e000"/><rect x="3.7" y="5.4" width="3.3" height="3.3" fill="#00c000"/><rect x="7" y="5.4" width="3.3" height="3.3" fill="#3050ff"/><text x="3.6" y="15.8" font-family="Liberation Sans" font-weight="bold" font-size="8.5" fill="#222">A</text><path d="M3.5 17.4 H10.6" stroke="#555" stroke-width="1" stroke-dasharray="1.3 0.8"/><rect x="11.4" y="7.199999999999999" width="8.3" height="6.0" rx="0.5" fill="url(#wg)" stroke="#5c5c5c" stroke-width="1.2"/><rect x="12.0" y="7.8" width="7.1" height="2.2" fill="#3546b8"/></svg>
<svg class="a" style="left:135.8px;top:825.2px;" width="24" height="20" viewBox="0 0 24 20"><rect x="3.6" y="3.2" width="15.5" height="11.2" fill="#d6e6f6" stroke="#888" stroke-width="1.1"/><path d="M5 9 Q8 5 11 4.5 Q15 5 17.5 7.5 Q15 10 12 12.5 Q9 10.5 5 9 Z" fill="#3a78c8"/><path d="M7 8.5 Q11 7 15.5 8" stroke="#9cc4f0" stroke-width="0.7" fill="none"/><path d="M11.3 14.4 V16.5 M7.8 16.8 H14.8" stroke="#888" stroke-width="1.2"/></svg>
<svg class="a" style="left:170px;top:825.2px;" width="24" height="20" viewBox="0 0 24 20"><text x="2.2" y="15.6" font-family="Liberation Serif" font-style="italic" font-size="16" fill="#1a1a1a">f</text><text x="9.2" y="15.8" font-family="Liberation Serif" font-style="italic" font-size="13.5" fill="#1a1a1a">x</text><path d="M9.6 5.2 Q14.4 0.2 19.2 5.2 Q14.4 9.8 9.6 5.2 Z" fill="#f4f4ff" stroke="#5a4aa8" stroke-width="1.1"/><circle cx="14.4" cy="5" r="2.1" fill="#3a40a8"/></svg>
</body></html>
